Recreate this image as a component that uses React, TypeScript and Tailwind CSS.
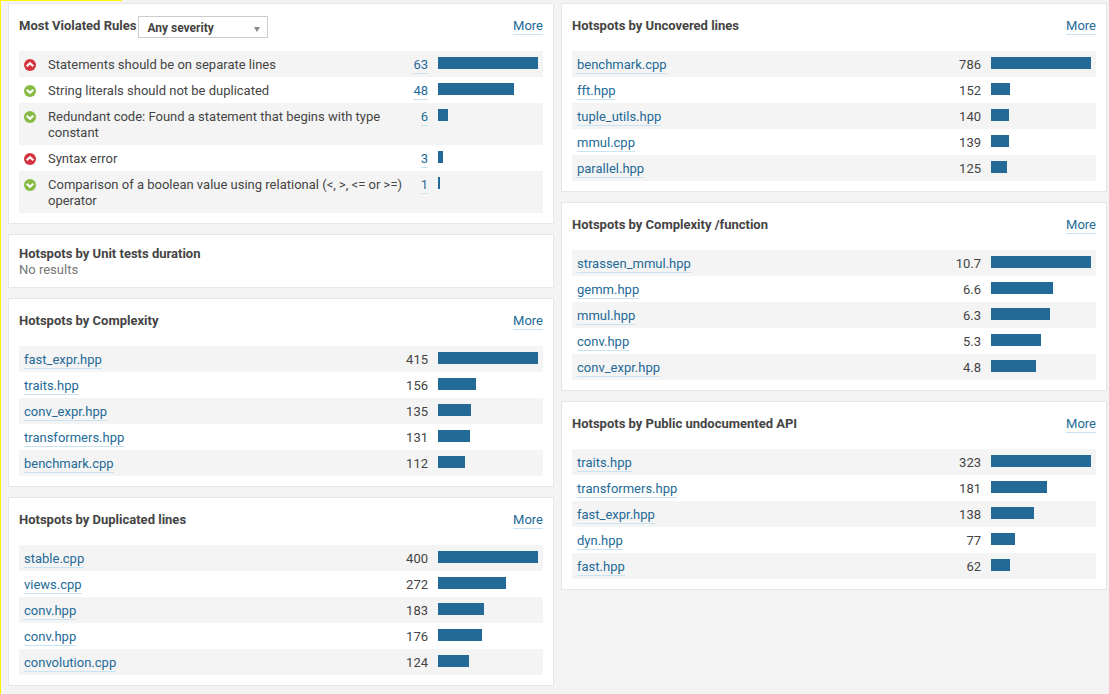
import React from "react";

type Severity = "high" | "low";

interface Row {
  name: string;
  value: string;
  severity?: Severity;
}

const rules: Row[] = [
  { name: "Statements should be on separate lines", value: "63", severity: "high" },
  { name: "String literals should not be duplicated", value: "48", severity: "low" },
  { name: "Redundant code: Found a statement that begins with type constant", value: "6", severity: "low" },
  { name: "Syntax error", value: "3", severity: "high" },
  { name: "Comparison of a boolean value using relational (<, >, <= or >=) operator", value: "1", severity: "low" },
];

const complexity: Row[] = [
  { name: "fast_expr.hpp", value: "415" },
  { name: "traits.hpp", value: "156" },
  { name: "conv_expr.hpp", value: "135" },
  { name: "transformers.hpp", value: "131" },
  { name: "benchmark.cpp", value: "112" },
];

const duplicated: Row[] = [
  { name: "stable.cpp", value: "400" },
  { name: "views.cpp", value: "272" },
  { name: "conv.hpp", value: "183" },
  { name: "conv.hpp", value: "176" },
  { name: "convolution.cpp", value: "124" },
];

const uncovered: Row[] = [
  { name: "benchmark.cpp", value: "786" },
  { name: "fft.hpp", value: "152" },
  { name: "tuple_utils.hpp", value: "140" },
  { name: "mmul.cpp", value: "139" },
  { name: "parallel.hpp", value: "125" },
];

const perFunction: Row[] = [
  { name: "strassen_mmul.hpp", value: "10.7" },
  { name: "gemm.hpp", value: "6.6" },
  { name: "mmul.hpp", value: "6.3" },
  { name: "conv.hpp", value: "5.3" },
  { name: "conv_expr.hpp", value: "4.8" },
];

const undocumented: Row[] = [
  { name: "traits.hpp", value: "323" },
  { name: "transformers.hpp", value: "181" },
  { name: "fast_expr.hpp", value: "138" },
  { name: "dyn.hpp", value: "77" },
  { name: "fast.hpp", value: "62" },
];

function TextLink({ children }: { children: React.ReactNode }) {
  return (
    <a href="#" className="border-b border-[#cae3f2] pb-px text-[#236a97]">
      {children}
    </a>
  );
}

function SeverityIcon({ severity }: { severity: Severity }) {
  const high = severity === "high";
  return (
    <svg viewBox="0 0 12 12" className="mt-0.5 block size-3" role="img" aria-label={high ? "Major" : "Minor"}>
      <circle cx="6" cy="6" r="6" fill={high ? "#d4333f" : "#85bb43"} />
      <path
        d={high ? "M2.7 7.3L6 4.2L9.3 7.3" : "M2.7 4.7L6 7.8L9.3 4.7"}
        fill="none"
        stroke="#fff"
        strokeWidth="2.2"
      />
    </svg>
  );
}

function Card({ children }: { children: React.ReactNode }) {
  return <section className="border border-[#e6e6e6] bg-white px-2.5 pt-[11px] pb-2.5">{children}</section>;
}

function Header({ title, children }: { title: string; children?: React.ReactNode }) {
  return (
    <div className="mb-3 flex h-6 items-start leading-[22px]">
      <h3 className="font-bold">{title}</h3>
      {children}
      <span className="ml-auto">
        <TextLink>More</TextLink>
      </span>
    </div>
  );
}

function BarTable({ rows, label }: { rows: Row[]; label: string }) {
  const max = Number(rows[0].value);
  return (
    <table className="w-full border-collapse" aria-label={label}>
      <tbody>
        {rows.map((row, i) => (
          <tr key={i} className="align-top odd:bg-[#f4f4f4]">
            {row.severity && (
              <td className="w-6 px-[5px] pt-1.5 pb-1">
                <SeverityIcon severity={row.severity} />
              </td>
            )}
            <td className="px-[5px] pt-1.5 pb-1">{row.severity ? row.name : <TextLink>{row.name}</TextLink>}</td>
            <td className="w-px px-[5px] pt-1.5 pb-1 text-right whitespace-nowrap">
              {row.severity ? <TextLink>{row.value}</TextLink> : row.value}
            </td>
            <td className="w-[110px] px-[5px] pt-1.5">
              <div
                className="h-3 bg-[#236a97]"
                style={{ width: `${Math.round((Number(row.value) / max) * 100)}%` }}
              />
            </td>
          </tr>
        ))}
      </tbody>
    </table>
  );
}

function Hotspots({ title, rows }: { title: string; rows: Row[] }) {
  return (
    <Card>
      <Header title={title} />
      <BarTable rows={rows} label={title} />
    </Card>
  );
}

export default function App() {
  return (
    <main className="relative min-h-screen border-l border-[#fcf400] bg-[#f3f3f3] pt-[3px] pr-0.5 pb-2 pl-[7px] font-['Roboto',sans-serif] text-[13px] leading-4 text-[#444]">
      <div className="absolute top-0 left-0 h-px w-[121px] bg-[#fcf400]" />
      <div className="grid grid-cols-2 items-start gap-[7px]">
        <div className="flex flex-col gap-2.5">
          <Card>
            <Header title="Most Violated Rules">
              <div className="relative mt-px ml-0.5">
                <select
                  aria-label="Severity"
                  className="block h-[22px] w-[130px] appearance-none border border-[#ccc] bg-white pt-0.5 pl-2 text-[12px] leading-[18px] font-bold text-[#444]"
                >
                  <option>Any severity</option>
                  <option>Blocker</option>
                  <option>Critical</option>
                  <option>Major</option>
                  <option>Minor</option>
                  <option>Info</option>
                </select>
                <svg viewBox="0 0 6 5" className="pointer-events-none absolute top-[11px] right-2 h-[5px] w-1.5" aria-hidden="true">
                  <path d="M0 0H6L3 5Z" fill="#888" />
                </svg>
              </div>
            </Header>
            <BarTable rows={rules} label="Most Violated Rules" />
          </Card>
          <Card>
            <h3 className="font-bold">Hotspots by Unit tests duration</h3>
            <p className="-mb-px text-[#777]">No results</p>
          </Card>
          <Hotspots title="Hotspots by Complexity" rows={complexity} />
          <Hotspots title="Hotspots by Duplicated lines" rows={duplicated} />
        </div>
        <div className="flex flex-col gap-2.5">
          <Hotspots title="Hotspots by Uncovered lines" rows={uncovered} />
          <Hotspots title="Hotspots by Complexity /function" rows={perFunction} />
          <Hotspots title="Hotspots by Public undocumented API" rows={undocumented} />
        </div>
      </div>
    </main>
  );
}
